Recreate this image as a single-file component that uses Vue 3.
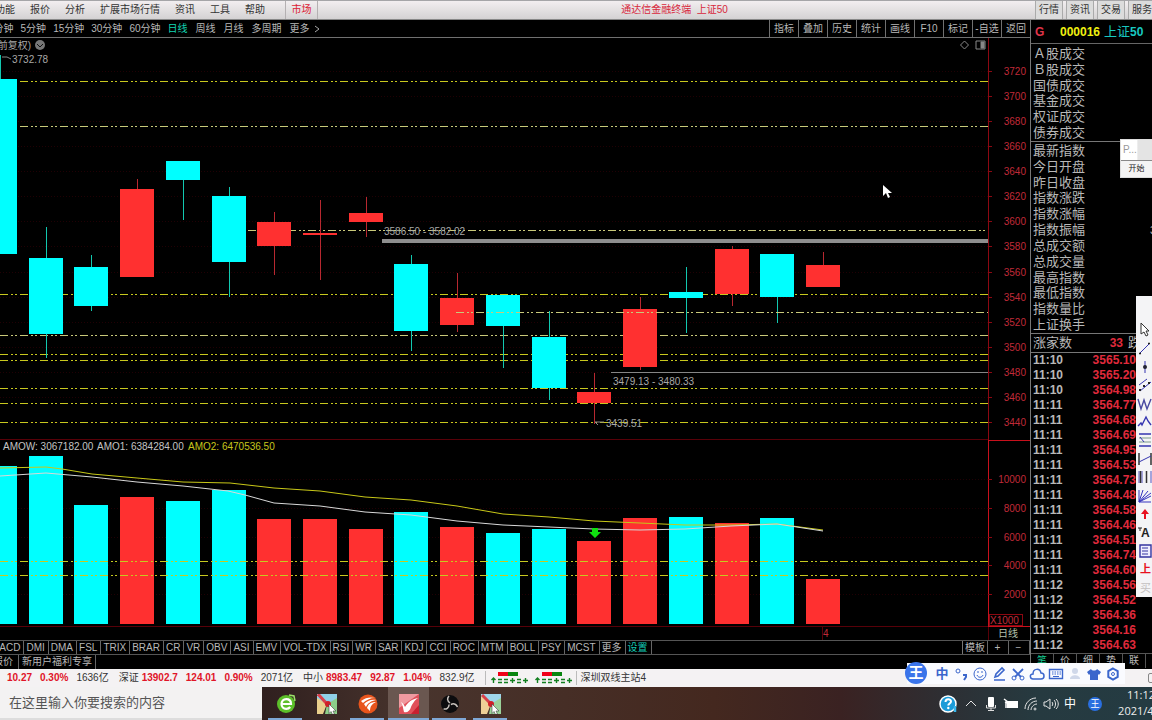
<script setup>
const menus = ['功能', '报价', '分析', '扩展市场行情', '资讯', '工具', '帮助']
const sections = ['行情', '资讯', '交易', '服务']
const minutes = ['1分钟', '5分钟', '15分钟', '30分钟', '60分钟']
const periods = ['日线', '周线', '月线', '多周期', '更多']
const tools = ['指标', '叠加', '历史', '统计', '画线', 'F10', '标记', '-自选', '返回']

const step = 45.72
const candles = [
  [79, 254, 55, 254, 466, 'c'],
  [258, 334, 227, 358, 456, 'c'],
  [267, 306, 255, 311, 505, 'c'],
  [189, 277, 179, 277, 497, 'r'],
  [161, 180, 161, 220, 501, 'c'],
  [196, 262, 187, 297, 490, 'c'],
  [222, 246, 212, 275, 519, 'r'],
  [233, 235, 200, 280, 519, 'r'],
  [213, 222, 197, 237, 529, 'r'],
  [264, 331, 255, 351, 512, 'c'],
  [298, 325, 273, 332, 527, 'r'],
  [295, 326, 295, 368, 533, 'c'],
  [337, 388, 311, 400, 529, 'c'],
  [392, 403, 373, 424, 541, 'r'],
  [309, 367, 297, 370, 518, 'r'],
  [292, 298, 267, 333, 517, 'c'],
  [249, 294, 246, 306, 523, 'r'],
  [254, 297, 254, 323, 518, 'c'],
  [265, 287, 252, 287, 579, 'r'],
].map(([top, bottom, high, low, volume, tone], i) => ({
  x: Math.round(i * step), top, bottom, high, low, volume, tone,
}))

const levels = [[81, 0], [126, 0, 1], [230, 228, 1], [294, 0], [335, 0, 1], [354, 0], [360, 0], [388, 0], [403, 0], [422, 0]]
const priceTicks = Array.from({ length: 15 }, (_, i) => ({ label: 3720 - i * 20, y: 71 + Math.round(i * 25.07) }))
const volumeTicks = [[10000, 479], [8000, 508], [6000, 537], [4000, 565], [2000, 594]]

const indicators = ['MACD', 'DMI', 'DMA', 'FSL', 'TRIX', 'BRAR', 'CR', 'VR', 'OBV', 'ASI', 'EMV', 'VOL-TDX', 'RSI', 'WR', 'SAR', 'KDJ', 'CCI', 'ROC', 'MTM', 'BOLL', 'PSY', 'MCST', '更多', '设置']

const turnover = ['Ａ股成交', 'Ｂ股成交', '国债成交', '基金成交', '权证成交', '债券成交']
const quotes = ['最新指数', '今日开盘', '昨日收盘', '指数涨跌', '指数涨幅', '指数振幅', '总成交额', '总成交量', '最高指数', '最低指数', '指数量比', '上证换手']
const deals = [
  ['11:10', '3565.10'], ['11:10', '3565.20'], ['11:10', '3564.98'], ['11:11', '3564.77'],
  ['11:11', '3564.68'], ['11:11', '3564.69'], ['11:11', '3564.95'], ['11:11', '3564.53'],
  ['11:11', '3564.73'], ['11:11', '3564.48'], ['11:11', '3564.58'], ['11:11', '3564.46'],
  ['11:11', '3564.51'], ['11:11', '3564.74'], ['11:11', '3564.60'], ['11:12', '3564.56'],
  ['11:12', '3564.52'], ['11:12', '3564.36'], ['11:12', '3564.16'], ['11:12', '3564.63'],
]
const sideTabs = ['笔', '价', '细', '势', '联']
const indexes = [
  ['', '10.27', '0.30%', '', '1636亿'],
  ['深证', '13902.7', '124.01', '0.90%', '2071亿'],
  ['中小', '8983.47', '92.87', '1.04%', '832.9亿'],
]
</script>

<template>
  <div class="desktop">
    <header class="menubar">
      <nav class="menus">
        <button v-for="m in menus" :key="m">{{ m }}</button>
      </nav>
      <button class="market">市场</button>
      <h1 class="title">通达信金融终端&nbsp; 上证50</h1>
      <nav class="sections">
        <button v-for="s in sections" :key="s">{{ s }}</button>
      </nav>
    </header>

    <main class="main">
      <section class="left">
        <div class="toolbar">
          <div class="minutes"><button v-for="m in minutes" :key="m">{{ m }}</button></div>
          <div class="periods">
            <button v-for="p in periods" :key="p" :class="{ on: p === '日线' }">{{ p }}</button>
            <svg class="chev" viewBox="0 0 6 8"><path d="M1 1l4 3-4 3" /></svg>
          </div>
          <div class="tools"><button v-for="t in tools" :key="t">{{ t }}</button></div>
        </div>

        <svg class="chart" viewBox="0 38 1030 602" role="img" aria-label="上证50 日线">
          <g class="faint">
            <line v-for="t in priceTicks" :key="t.y" x1="0" x2="988" :y1="t.y + 0.5" :y2="t.y + 0.5" />
            <line v-for="t in volumeTicks" :key="t[0]" x1="0" x2="988" :y1="t[1] + 0.5" :y2="t[1] + 0.5" />
          </g>
          <g class="level">
            <line v-for="l in levels" :key="l[0]" :x1="l[1]" x2="988" :y1="l[0] + 0.5" :y2="l[0] + 0.5" :class="{ pale: l[2] }" />
          </g>
          <rect class="band" x="382" y="239" width="606" height="4" />
          <line class="thin" x1="611" x2="988" y1="372.5" y2="372.5" />
          <g v-for="c in candles" :key="c.x" :class="c.tone">
            <line :x1="c.x + 0.5" :x2="c.x + 0.5" :y1="c.high" :y2="c.low" />
            <rect :x="c.x - 17" :y="c.top" width="34" :height="c.bottom - c.top" />
            <rect :x="c.x - 17" :y="c.volume" width="34" :height="624 - c.volume" />
          </g>
          <g class="level">
            <line class="pale" x1="456" x2="988" y1="312.5" y2="312.5" />
            <line x1="0" x2="988" y1="561.5" y2="561.5" />
            <line x1="0" x2="988" y1="575.5" y2="575.5" />
          </g>
          <polyline class="ma yellow" points="0,468 46,467 62,469 92,474 137,478 183,482 230,483 274,488 320,491 365,497 411,500 457,506 503,514 549,517 594,521 640,523 685,525 731,525 777,524 823,530" />
          <polyline class="ma" points="0,476 46,473 92,477 137,482 183,486 228,491 245,495 274,503 320,506 365,512 411,515 457,521 503,525 549,527 594,529 640,530 685,529 731,526 777,524 823,531" />
          <path class="down" d="M592 528h6v4h3l-6 6-6-6h3z" />

          <g class="note">
            <text x="31" y="49" text-anchor="end">(前复权)</text>
            <circle cx="40" cy="45" r="5" /><path d="M37 44l3 3 3-3" class="tick" />
            <text x="12" y="63">3732.78</text><path d="M2 57h5l4 2" />
            <text x="384" y="235">3586.50 - 3582.02</text>
            <text x="613" y="385">3479.13 - 3480.33</text>
            <text x="606" y="427">3439.51</text><path d="M595 422h9M595 422l3 3" />
            <path d="M964.500 41l4 4-4 4-4-4zM976 41h9v8h-9z" /><path d="M981 42h3v6h-3z" class="solid" />
          </g>
          <g class="amo">
            <text x="3" y="450">AMOW: 3067182.00</text>
            <text x="97" y="450">AMO1: 6384284.00</text>
            <text x="188" y="450" class="ylw">AMO2: 6470536.50</text>
          </g>

          <g class="axis">
            <line x1="0" x2="988" y1="439.5" y2="439.5" class="dim" />
            <line x1="0" x2="988" y1="626.5" y2="626.5" class="dim" />
            <line x1="988" x2="1030" y1="440.500" y2="440.500" />
            <line x1="988" x2="1030" y1="626.500" y2="626.500" />
            <line x1="988.500" x2="988.500" y1="38" y2="440" class="mid" />
            <line x1="988.500" x2="988.500" y1="440" y2="627" />
            <line x1="988.500" x2="988.500" y1="627" y2="640" class="dim" />
            <line x1="822.500" x2="822.500" y1="627" y2="640" class="dim" />
            <rect x="989.500" y="614.500" width="33" height="11" class="mid" />
            <g v-for="t in priceTicks" :key="t.label">
              <line x1="988" x2="992" :y1="t.y + 0.5" :y2="t.y + 0.5" class="mid" />
              <text x="1026" :y="t.y + 4" text-anchor="end">{{ t.label }}</text>
            </g>
            <g v-for="t in volumeTicks" :key="t[0]">
              <line x1="988" x2="992" :y1="t[1] + 0.5" :y2="t[1] + 0.5" class="mid" />
              <text x="1026" :y="t[1] + 4" text-anchor="end">{{ t[0] }}</text>
            </g>
            <text x="990" y="624">X1000</text>
            <text x="823" y="637">4</text>
            <text x="998" y="637" class="day">日线</text>
          </g>
        </svg>

        <div class="indicators">
          <button v-for="i in indicators" :key="i" :class="{ on: i === '设置' }">{{ i }}</button>
          <span class="fill"></span>
          <button class="tpl">模板</button><button class="zoom">+</button><button class="zoom">−</button>
        </div>
        <div class="news"><button>报价</button><button>新用户福利专享</button></div>
      </section>

      <aside class="panel">
        <div class="symbol"><b class="g">G</b><b class="code">000016</b><span class="name">上证<b>50</b></span></div>
        <ul class="list six"><li v-for="t in turnover" :key="t">{{ t }}</li></ul>
        <ul class="list twelve">
          <li v-for="q in quotes" :key="q">{{ q }}<span v-if="q === '指数振幅'">3</span></li>
        </ul>
        <div class="breadth"><span>涨家数</span><b>33</b><span>跌</span></div>
        <table class="deals">
          <tbody>
            <tr v-for="(d, i) in deals" :key="i"><td>{{ d[0] }}</td><td class="price">{{ d[1] }}</td></tr>
          </tbody>
        </table>
        <div class="sidetabs"><button v-for="s in sideTabs" :key="s" :class="{ on: s === '笔' }">{{ s }}</button></div>
      </aside>
    </main>

    <footer class="status">
      <div v-for="(g, i) in indexes" :key="i" class="index">
        <span v-if="g[0]" class="label">{{ g[0] }}</span>
        <b>{{ g[1] }}</b><b>{{ g[2] }}</b><b v-if="g[3]">{{ g[3] }}</b><span>{{ g[4] }}</span>
      </div>
      <div class="flows">
        <svg v-for="n in 2" :key="n" viewBox="0 0 38 14">
          <path fill="#f00018" d="M7 1h10v4H7z" /><path fill="#07860f" d="M17 1h10v4H17z" />
          <path class="marks" d="M2.500 12V7M0.500 9l2-2 2 2M7 8.500h4M7 11.500h4M13 8.500h4M13 11.500h4M19 9.500h5M21.500 7v5M26 8.500h4M26 11.500h4M32 9.500h5M34.500 7v5" />
        </svg>
      </div>
      <span class="server">深圳双线主站4</span>
      <span class="box"></span>
    </footer>

    <div class="taskbar">
      <input class="search" type="text" placeholder="在这里输入你要搜索的内容" aria-label="搜索" />
      <button class="app run" aria-label="浏览器">
        <svg viewBox="0 0 20 20"><circle cx="10" cy="10" r="9" fill="#5cbf2a" /><path d="M5.500 10h9.500c0-3-2-4.800-4.800-4.800S5.500 7.200 5.500 10s2 4.800 4.700 4.800c1.800 0 3-.6 4-1.800" fill="none" stroke="#fff" stroke-width="2.200" /><path d="M13 1l5 1 1 5" fill="none" stroke="#9be06a" stroke-width="1.500" /></svg>
      </button>
      <button class="app" aria-label="画板">
        <svg viewBox="0 0 20 20"><path fill="#8fd0e8" d="M0 0h20v10H0z" /><path fill="#e9cf8c" d="M0 4l10 6-4 10H0z" /><path fill="#8ccf8a" d="M10 10L20 4v16H8z" /><path d="M1 0l9 10" stroke="#d8404a" stroke-width="3" /><circle cx="11" cy="10" r="3" fill="#d02028" /><path d="M12 10l7 7-3 0 1.500 3-2 .5-1.500-3-2 2z" fill="#fff" stroke="#444" stroke-width=".6" /></svg>
      </button>
      <button class="app run" aria-label="财经">
        <svg viewBox="0 0 20 20"><circle cx="10" cy="10" r="9.500" fill="#e8541c" /><path d="M3 7c5-4 10-4 14-3-5 0-9 2-12 5zM6 10c3-3 7-5 12-4-5 1-8 3-10 7zM9 14c1-4 4-6 9-6-4 2-6 4-6 9z" fill="#fff" /></svg>
      </button>
      <button class="app run active" aria-label="通达信">
        <svg viewBox="0 0 20 20"><path fill="#e0505a" d="M0 0h20v20H0z" /><path fill="#f09aa0" d="M0 0h20L0 14z" /><path fill="#c82030" d="M12 20l8-9v9z" /><path d="M2 8c2 1 3 3 4 5 3-5 7-8 13-9-4 3-5 5-7 9-1 4-4 6-7 5-1-3-1-7-3-10z" fill="#fff" /></svg>
      </button>
      <button class="app run" aria-label="录屏">
        <svg viewBox="0 0 20 20"><circle cx="10" cy="10" r="9" fill="#0c0c0e" /><g fill="none" stroke="#c8c2bd" stroke-width="1.500"><path d="M10 9C7 7 7 4 9 2" /><path d="M10 9C7 7 7 4 9 2" transform="rotate(120 10 10)" /><path d="M10 9C7 7 7 4 9 2" transform="rotate(240 10 10)" /></g></svg>
      </button>
      <button class="app run" aria-label="画图">
        <svg viewBox="0 0 20 20"><path fill="#9fd6ea" d="M0 0h20v10H0z" /><path fill="#efcf96" d="M0 2l10 8-4 10H0z" /><path fill="#9bd39a" d="M10 10L20 4v16H8z" /><path d="M1 1l9 9" stroke="#d8404a" stroke-width="3" /><circle cx="10" cy="10" r="3" fill="#d02028" /><path d="M11 10l7 7-3 0 1.500 3-2 .5-1.500-3-2 2z" fill="#fff" stroke="#444" stroke-width=".6" /></svg>
      </button>
      <span class="fill"></span>
      <div class="tray">
        <svg viewBox="0 0 20 20" class="help"><circle cx="9" cy="10" r="8" fill="#1c9bd8" stroke="#fff" stroke-width="1.500" /><path d="M6.500 8c0-3.500 5.500-3.500 5.500-.5 0 2-2.700 2-2.700 4" fill="none" stroke="#fff" stroke-width="2" /><circle cx="9.300" cy="14" r="1.200" fill="#fff" /><path d="M16 12v6" stroke="#37b7ec" stroke-width="2.500" /></svg>
        <svg viewBox="0 0 16 16" class="ln"><path d="M3 10l5-5 5 5" /></svg>
        <svg viewBox="0 0 16 16"><rect x="5" y="1" width="6" height="10" rx="1" fill="#fff" /><path d="M3.500 9v3h9V9M8 12v3M5 14.500h6" fill="none" stroke="#ddd" /></svg>
        <svg viewBox="0 0 16 16"><path d="M4 5h11v7H4z" fill="#fff" /><path d="M1 3l4 3M2 6l3 1M3 7v5" stroke="#fff" stroke-width="1.500" /></svg>
        <svg viewBox="0 0 16 16" class="ln"><path d="M2 13C2 7 7 2 13 2M5 14c0-5 4-9 9-9M8 14c0-3 3-6 6-6" /><circle cx="12" cy="13" r="1" /></svg>
        <svg viewBox="0 0 16 16" class="ln"><path d="M1 6h2l4-3v10l-4-3H1zM9 6c1 1 1 3 0 4M11 4c2 2 2 6 0 8M13 3c3 3 3 7 0 10" /></svg>
        <span class="lang">中</span>
        <span class="ball">王</span>
      </div>
      <time class="clock"><span>11:12</span><span>2021/4/8</span></time>
    </div>

    <div class="starter">
      <div class="cap"><span>P...</span></div>
      <button>开始</button>
    </div>

    <div class="draw">
      <svg viewBox="0 0 16 18"><path d="M5 2v11l3-2 2 4 2-1-2-4h3z" fill="#fff" stroke="#333" /></svg>
      <svg viewBox="0 0 16 18"><path d="M3 15L14 4" stroke="#3535b0" /><path d="M3 14.500h2M12 4.500h2" stroke="#222" stroke-width="1.500" /></svg>
      <svg viewBox="0 0 16 18"><path d="M9 3v12" stroke="#3535b0" /><circle cx="9" cy="9" r="2" fill="#223" /></svg>
      <svg viewBox="0 0 16 18"><path d="M3 9l8-6M4 15l11-9" stroke="#3535b0" /><path d="M3 14h2M7 10h2M12 7h2" stroke="#222" stroke-width="2" /></svg>
      <svg viewBox="0 0 16 18"><path d="M2 4l3 10 3-9 3 9 4-10" fill="none" stroke="#4848a0" stroke-width="1.400" /></svg>
      <svg viewBox="0 0 16 18"><path d="M2 13l3-3 1 2 4-8 2 4 3 4" fill="none" stroke="#3535b0" stroke-width="1.400" /></svg>
      <svg viewBox="0 0 16 18"><path d="M3 3h12M3 15h12" stroke="#3535b0" stroke-width="1.500" /><path d="M3 7h12M3 11h12" stroke="#7a9a8a" /><path d="M4 6l4 5" stroke="#3535b0" /></svg>
      <svg viewBox="0 0 16 18"><path d="M3 3v12M15 3v12" stroke="#333" stroke-width="1.500" /><path d="M3 12l12-6" stroke="#3535b0" /></svg>
      <svg viewBox="0 0 16 18"><path d="M3 3v12M6 3v12M15 3v12" stroke="#5555c0" /><path d="M4.500 3v12M10.500 3v12" stroke="#333" stroke-width="1.500" /></svg>
      <svg viewBox="0 0 16 18"><path d="M3 3v12h12M3 15L7 3M3 15L12 4M3 15l12-6M3 15l12-9" stroke="#3535c0" fill="none" /></svg>
      <svg viewBox="0 0 16 18"><path d="M9 4l4 5h-3v5H8V9H5z" fill="#e81020" /></svg>
      <svg viewBox="0 0 16 18"><text x="5" y="14" class="bold">A</text><path d="M2 5h4M4 5v3" stroke="#222" /></svg>
      <svg viewBox="0 0 16 18"><path d="M4 3h11v12H4z" fill="#eef" stroke="#3535a0" stroke-width="1.400" /><path d="M6 6h6M6 9h6M6 12h6" stroke="#3535a0" /></svg>
      <svg viewBox="0 0 16 18"><text x="4" y="13" class="up">上</text></svg>
      <svg viewBox="0 0 16 18"><text x="4" y="13" class="buy">买</text></svg>
    </div>

    <div class="ime">
      <span class="logo">王</span>
      <span class="zh">中</span>
      <svg viewBox="0 0 16 16"><circle cx="5" cy="5" r="2" /><path d="M10 9h3v2l-2 3" stroke-width="2" /></svg>
      <svg viewBox="0 0 16 16"><circle cx="8" cy="8" r="6" /><path d="M5 9c1 3 5 3 6 0M6 5v2M10 5v2" /></svg>
      <svg viewBox="0 0 16 16"><path d="M4 11l1-3 6-6 2 2-6 6zM3 14h11" stroke-width="1.600" /></svg>
      <svg viewBox="0 0 16 16"><path d="M3 3l8 8M13 3l-8 8" stroke-width="1.800" /><circle cx="4" cy="12" r="2" /><circle cx="12" cy="12" r="2" /></svg>
      <svg viewBox="0 0 16 16"><path d="M4 13c-3 0-4-5 0-5 0-6 7-6 8-1 4 0 4 6 0 6z" stroke-width="1.500" /></svg>
      <svg viewBox="0 0 16 16"><path d="M1.500 3.500h13v9h-13z" stroke-width="1.400" /><path d="M4 6h9M4 8h9" stroke-dasharray="1.500 1" /><path d="M5 10.500h6" /></svg>
      <svg viewBox="0 0 16 16" class="ghost"><circle cx="8" cy="5" r="3" /><path d="M3 13c0-5 10-5 10 0z" /></svg>
      <svg viewBox="0 0 16 16" class="full"><path d="M5 3c1 2 5 2 6 0l4 3-2 3-1-1v6H4V8L3 9 1 6z" /></svg>
      <svg viewBox="0 0 16 16"><path d="M8 2.500l4.700 2.700v5.600L8 13.500l-4.700-2.700V5.200z" stroke-width="2" /><circle cx="8" cy="8" r="1.500" /></svg>
    </div>

    <svg class="pointer" viewBox="0 0 10 16"><path d="M1 1v11l3-3 2 5 2-1-2-4h4z" fill="#fff" /></svg>
  </div>
</template>

<style>
body { background: #000; }
</style>

<style scoped>
.desktop {
  position: relative;
  display: flex;
  flex-direction: column;
  min-height: 100vh;
  overflow: hidden;
  background: #000;
  color: #b8b8b8;
  font: 10px/14px "Liberation Sans", "Noto Sans CJK SC", sans-serif;
  white-space: nowrap;
}
.desktop * { box-sizing: border-box; }
button { flex: none; margin: 0; padding: 0; border: 0; background: none; color: inherit; font: inherit; }
.fill { flex: 1; }

.menubar { display: flex; height: 20px; background: linear-gradient(#f2eef0, #d4d2d3); border-top: 1px solid #a5a5a8; border-bottom: 1px solid #888; color: #333; }
.menus { display: flex; gap: 15px; margin-left: -5px; padding-right: 20px; }
.market { width: 33px; border: solid #b4b0b2; border-width: 0 1px; color: #dc2235; }
.title { flex: 1; margin: 0; padding-right: 4px; text-align: center; font: inherit; line-height: 18px; color: #d8283c; }
.sections { display: flex; gap: 3px; width: 117px; overflow: hidden; }
.sections button { width: 28px; border: solid #aaa; border-width: 0 1px; background: #dcdcdc; }

.main { display: grid; grid-template-columns: minmax(0, 1fr) 122px; flex: 1; }
.left { display: flex; flex-direction: column; min-width: 0; overflow: hidden; }
.toolbar { display: flex; height: 18px; border-bottom: 1px solid #707070; }
.minutes { display: flex; gap: 7px; margin-left: -12px; padding-right: 7px; }
.periods { display: flex; align-items: center; gap: 8px; flex: 1; }
.periods .on { color: #12d6b4; }
.chev { width: 6px; height: 8px; margin-left: -4px; fill: none; stroke: #aaa; }
.tools { display: flex; }
.tools button { width: 29px; border-left: 1px solid #707070; }

.chart { display: block; width: 100%; font-size: 10px; }
.faint line { stroke: #200004; stroke-dasharray: 1 2; }
.level line { stroke: #c8c81e; stroke-dasharray: 8 3 2 2 2 3; }
.level .pale { stroke: #c9c97a; }
.band { fill: #8e8e8e; }
.thin { stroke: #858585; }
.c rect { fill: #00ffff; }
.c line { stroke: #12c8b0; }
.r rect { fill: #ff3030; }
.r line { stroke: #b82830; }
.ma { fill: none; stroke: #d8d8d8; }
.ma.yellow { stroke: #c8c818; }
.down { fill: #10e010; }
.note text { fill: #a8a8a8; }
.note path { fill: none; stroke: #888; }
.note circle { fill: #777; }
.note .tick { stroke: #111; }
.note .solid { fill: #888; }
.amo text { fill: #c4c4c4; }
.amo .ylw { fill: #c6c61c; }
.axis line { stroke: #c8101c; }
.axis .dim { stroke: #580008; }
.axis .mid { stroke: #8c0812; fill: none; }
.axis text { fill: #c02a38; }
.axis .day { fill: #b4c0ac; }

.indicators { display: flex; height: 15px; border: solid #555; border-width: 1px 0; }
.indicators button { padding: 0 3px 0 2px; border-right: 1px solid #666; line-height: 13px; }
.indicators button:first-child { margin-left: -11px; }
.indicators .on { color: #14c8b4; width: 26px; }
.indicators .tpl { width: 26px; border-left: 1px solid #777; }
.indicators .zoom { width: 21px; text-align: center; }
.news { display: flex; height: 14px; }
.news button { padding: 0 3px; border-right: 1px solid #666; }
.news button:first-child { margin-left: -10px; padding-right: 5px; }

.panel { border-left: 1px solid #777; min-width: 0; overflow: hidden; }
.symbol { display: flex; align-items: center; height: 24px; padding-left: 4px; border-bottom: 1px solid #666; font-size: 12px; }
.g { width: 25px; color: #e0354a; }
.code { width: 44px; color: #f0f010; }
.name { color: #18c8c0; font-size: 13px; }
.name b { font-size: 12px; }
.list { display: grid; margin: 0; padding: 2px 0 0 2px; list-style: none; border-bottom: 1px solid #777; font-size: 13px; line-height: 16px; }
.list li { display: flex; justify-content: space-between; }
.list span { margin-right: -4px; font-size: 11px; }
.six { height: 98px; grid-template-rows: repeat(6, minmax(0, 1fr)); }
.twelve { height: 192px; padding-top: 1px; grid-template-rows: repeat(12, minmax(0, 1fr)); }
.breadth { display: flex; align-items: center; height: 19px; padding-left: 2px; border-bottom: 1px solid #777; font-size: 13px; }
.breadth b { width: 51px; margin-right: 5px; text-align: right; font-size: 12px; color: #e02a3c; }
.deals { width: 105px; border-collapse: collapse; font: bold 12px/15px "Liberation Sans", sans-serif; }
.deals td { height: 15px; padding: 0 0 0 2px; }
.deals .price { padding: 0; text-align: right; color: #e02a3c; }
.sidetabs { display: flex; border-top: 1px solid #555; }
.sidetabs button { width: 23px; height: 14px; border-right: 1px solid #555; }
.sidetabs .on { color: #14c890; }

.status { display: flex; align-items: center; height: 18px; padding-left: 7px; background: #f4f2f3; color: #333; }
.index { display: flex; gap: 8px; margin-right: 10px; }
.index b { color: #e01428; }
.index .label { margin-right: -5px; }
.flows { display: flex; gap: 6px; padding: 0 3px 0 5px; border: solid #bbb; border-width: 0 1px; }
.flows svg { width: 38px; height: 14px; }
.marks { fill: none; stroke: #128020; stroke-width: 1.400; }
.server { flex: 1; padding-left: 4px; }
.box { width: 10px; height: 10px; margin-right: -6px; border: 1px solid #888; border-radius: 2px; }

.taskbar { display: flex; height: 33px; background: linear-gradient(90deg, #30201f 23%, #48342d 36%, #44281f 62%, #3a2222 73%, #2c3035 83%, #263a40 90%, #243b42); }
.search { width: 262px; padding: 0 9px; border: 0; border-bottom: 2px solid #ddd; background: #f3f2f2; font: 13px "Liberation Sans", "Noto Sans CJK SC", sans-serif; color: #444; }
.search::placeholder { color: #555; opacity: 1; }
.app { display: flex; align-items: center; justify-content: center; width: 41px; border: 0 solid transparent; position: relative; }
.search + .app { margin-left: 3px; }
.app svg { width: 20px; height: 20px; }
.app.run::after { content: ""; position: absolute; left: 3px; right: 4px; bottom: 0; height: 2px; background: #7fa8d6; }
.app.active { background: #6a5750; }
.app.active::after { left: 0; right: 0; }
.tray { display: flex; align-items: center; gap: 4px; color: #fff; }
.tray svg { width: 16px; height: 16px; }
.tray .help { width: 20px; height: 20px; }
.ln { fill: none; stroke: #e4e4e4; }
.lang { width: 16px; margin-left: -1px; font-size: 12px; text-align: center; }
.ball { width: 14px; height: 14px; margin-left: 6px; border-radius: 7px; background: #2a6fe0; font-size: 9px; text-align: center; line-height: 14px; }
.clock { display: flex; flex-direction: column; align-items: center; width: 44px; flex: none; margin: 0 -11px 0 17px; font: 11px/16px "Open Sans", sans-serif; color: #eee; }

.starter { position: absolute; top: 139px; right: 0; width: 32px; border: 1px solid #ddd; border-right: 0; background: #fff; color: #999; }
.cap { height: 20px; padding-left: 2px; line-height: 20px; background: linear-gradient(90deg, #fff 50%, #e4e4e4 55%); }
.starter button { width: 100%; height: 17px; border-top: 1px solid #888; background: #f4f4f4; color: #222; font-size: 8px; }

.draw { position: absolute; top: 296px; right: 0; width: 16px; height: 301px; padding-top: 25px; display: grid; grid-template-rows: repeat(15, minmax(0, 1fr)); background: #f4f4f6; }
.draw svg { width: 16px; height: 18px; }
.draw .bold { font-size: 12px; font-weight: bold; fill: #222; }
.draw .up { font-size: 11px; font-weight: bold; fill: #e81020; }
.draw .buy { font-size: 11px; fill: #c4c0c0; }

.ime { position: absolute; right: 27px; bottom: 36px; display: flex; align-items: center; gap: 3px; height: 21px; padding: 0 4px 0 27px; background: #fafbff; }
.ime svg { width: 16px; height: 16px; fill: none; stroke: #3b66cc; }
.ime .ghost { fill: #d0d8ea; stroke: none; }
.ime .full { fill: #3b66cc; stroke: none; }
.zh { width: 16px; color: #3b66cc; font-size: 13px; font-weight: bold; text-align: center; }
.logo { position: absolute; left: -2px; top: -1px; width: 22px; height: 22px; border-radius: 11px; background: #3a74ea; color: #fff; font-size: 15px; font-weight: bold; line-height: 21px; text-align: center; }
.pointer { position: absolute; left: 882px; top: 184px; width: 10px; height: 16px; }
</style>
